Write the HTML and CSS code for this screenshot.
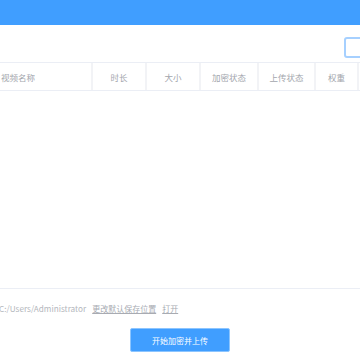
FILE: index.html
```html
<!DOCTYPE html>
<html lang="zh-CN">
<head>
  <meta charset="UTF-8">
  <meta name="viewport" content="width=device-width, initial-scale=1.0">
  <title>视频加密上传</title>
  <link rel="stylesheet" href="styles.css">
</head>
<body>
  <div class="topbar"></div>

  <div class="toolbar">
    <button class="add-btn"></button>
  </div>

  <div class="table">
    <div class="thead">
      <div class="th name">视频名称</div>
      <div class="th c-time">时长</div>
      <div class="th c-size">大小</div>
      <div class="th c-enc">加密状态</div>
      <div class="th c-up">上传状态</div>
      <div class="th c-weight">权重</div>
      <div class="th c-rest"></div>
    </div>
    <div class="tbody"></div>
  </div>

  <div class="save-path">
    <span class="path">C:/Users/Administrator</span>
    <a href="#" class="link">更改默认保存位置</a>
    <a href="#" class="link">打开</a>
  </div>

  <div class="actions">
    <button class="start-btn">开始加密并上传</button>
  </div>
</body>
</html>
```

FILE: styles.css
```css
body {
  margin: 0;
  font-family: "Noto Sans CJK SC", "Noto Sans", sans-serif;
  background: #fff;
  overflow: hidden;
}

.topbar {
  height: 25px;
  background-color: #409eff;
}

.toolbar {
  display: flex;
  justify-content: flex-end;
  padding-top: 12px;
  height: 25px;
  overflow: hidden;
}

.add-btn {
  width: 40px;
  height: 21px;
  margin-right: -24px;
  background: #fff;
  border: 2px solid #a6d0ff;
  border-radius: 3px;
  padding: 0;
}

/* tabla */
.table {
  border-bottom: 1px solid #ebeef5;
}

.thead {
  display: flex;
  height: 27px;
  border-top: 1px solid #ebeef5;
  border-bottom: 1px solid #ebeef5;
}

.th {
  display: flex;
  align-items: center;
  justify-content: center;
  font-size: 8.5px;
  color: #a3a6ad;
  border-right: 2px solid #f2f3f6;
  box-sizing: border-box;
}

.th.name {
  width: 93px;
  justify-content: flex-start;
  padding-left: 1px;
}

.c-time { width: 54px; }
.c-size { width: 54px; }
.c-enc { width: 58px; }
.c-up { width: 57px; }
.c-weight { width: 43px; }
.c-rest { flex: 1; border-right: none; }

.tbody {
  height: 197px;
}

/* pie */
.save-path {
  display: flex;
  align-items: center;
  gap: 6px;
  height: 16px;
  margin-top: 11px;
  font-size: 8.2px;
  color: #b4b7bd;
}

.path {
  margin-left: -1px;
}

.link {
  color: #a8abb2;
  font-size: 8px;
  text-decoration: underline;
}

.actions {
  display: flex;
  justify-content: center;
  margin-top: 12px;
}

.start-btn {
  width: 100px;
  height: 24px;
  background-color: #409eff;
  border: 1px solid #8cc5ff;
  border-radius: 2px;
  color: #fff;
  font-family: inherit;
  font-size: 8px;
  padding: 0;
}
```
